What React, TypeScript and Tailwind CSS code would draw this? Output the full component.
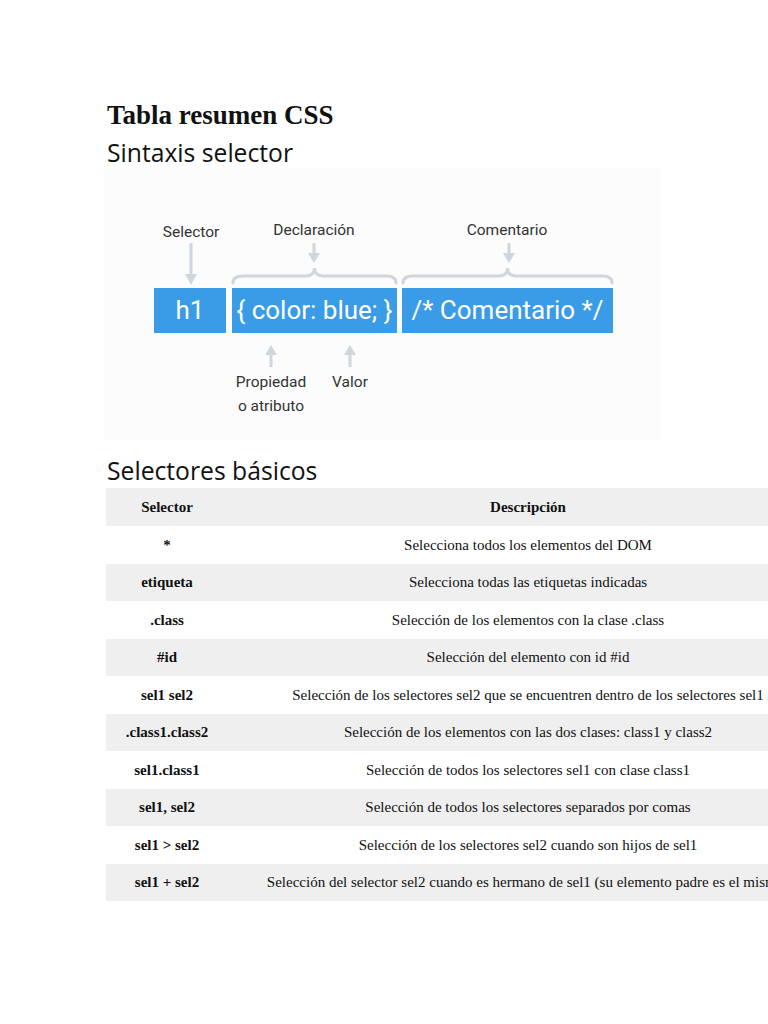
import React from 'react';

const rows: [string, string][] = [
  ['*', 'Selecciona todos los elementos del DOM'],
  ['etiqueta', 'Selecciona todas las etiquetas indicadas'],
  ['.class', 'Selección de los elementos con la clase .class'],
  ['#id', 'Selección del elemento con id #id'],
  ['sel1 sel2', 'Selección de los selectores sel2 que se encuentren dentro de los selectores sel1'],
  ['.class1.class2', 'Selección de los elementos con las dos clases: class1 y class2'],
  ['sel1.class1', 'Selección de todos los selectores sel1 con clase class1'],
  ['sel1, sel2', 'Selección de todos los selectores separados por comas'],
  ['sel1 > sel2', 'Selección de los selectores sel2 cuando son hijos de sel1'],
  ['sel1 + sel2', 'Selección del selector sel2 cuando es hermano de sel1 (su elemento padre es el mismo)'],
];

// llave horizontal entre x1 y x2 (coordenadas del diagrama)
function brace(x1: number, x2: number) {
  const mid = (x1 + x2) / 2;
  return `M ${x1} 115 Q ${x1} 108 ${x1 + 10} 108 L ${mid - 9} 108 Q ${mid} 108 ${mid} 100 Q ${mid} 108 ${mid + 9} 108 L ${x2 - 10} 108 Q ${x2} 108 ${x2} 115`;
}

function SyntaxDiagram() {
  const stroke = '#cfd6dd';
  return (
    <div className="relative w-[557px] h-[272px] bg-[#fcfcfc] ml-[-3px] font-['Roboto',sans-serif]">
      <svg className="absolute inset-0" width="557" height="272" viewBox="0 0 557 272" fill="none">
        {/* flecha selector */}
        <line x1="87" y1="75" x2="87" y2="108" stroke={stroke} strokeWidth="3" />
        <path d="M 81 106 L 93 106 L 87 117 Z" fill={stroke} />
        {/* flecha declaración */}
        <line x1="210" y1="75" x2="210" y2="86" stroke={stroke} strokeWidth="3" />
        <path d="M 204 85 L 216 85 L 210 95 Z" fill={stroke} />
        {/* flecha comentario */}
        <line x1="405" y1="75" x2="405" y2="86" stroke={stroke} strokeWidth="3" />
        <path d="M 399 85 L 411 85 L 405 95 Z" fill={stroke} />
        <path d={brace(129, 292)} stroke={stroke} strokeWidth="3" strokeLinecap="round" />
        <path d={brace(299, 508)} stroke={stroke} strokeWidth="3" strokeLinecap="round" />
        {/* flechas hacia arriba */}
        <path d="M 161 187 L 173 187 L 167 177 Z" fill={stroke} />
        <line x1="167" y1="186" x2="167" y2="199" stroke={stroke} strokeWidth="3" />
        <path d="M 240 187 L 252 187 L 246 177 Z" fill={stroke} />
        <line x1="246" y1="186" x2="246" y2="199" stroke={stroke} strokeWidth="3" />
      </svg>

      <div className="absolute left-[42px] top-[53px] w-[90px] text-center text-[15.5px] text-[#333]">Selector</div>
      <div className="absolute left-[145px] top-[51px] w-[130px] text-center text-[15.5px] text-[#333]">Declaración</div>
      <div className="absolute left-[338px] top-[51px] w-[130px] text-center text-[15.5px] text-[#333]">Comentario</div>

      <div className="absolute left-[50px] top-[120px] w-[72px] h-[45px] bg-[#3a9be6] text-white text-[26px] flex items-center justify-center">h1</div>
      <div className="absolute left-[128px] top-[120px] w-[165px] h-[45px] bg-[#3a9be6] text-white text-[26px] flex items-center justify-center whitespace-nowrap">{'{ color: blue; }'}</div>
      <div className="absolute left-[298px] top-[120px] w-[211px] h-[45px] bg-[#3a9be6] text-white text-[26px] flex items-center justify-center whitespace-nowrap">/* Comentario */</div>

      <div className="absolute left-[114px] top-[202px] w-[106px] text-center text-[15.5px] leading-[24px] text-[#333]">
        Propiedad
        <br />o atributo
      </div>
      <div className="absolute left-[216px] top-[202px] w-[60px] text-center text-[15.5px] leading-[24px] text-[#333]">Valor</div>
    </div>
  );
}

export default function App() {
  return (
    <div className="w-[768px] min-h-[1024px] bg-white overflow-hidden text-[#111]">
      <div className="pl-[107px] pt-[99px] pb-[120px]">
        <h1 className="font-['Liberation_Serif',serif] font-bold text-[27px] leading-[32px]">Tabla resumen CSS</h1>
        <h2 className="font-['Open_Sans',sans-serif] text-[24.7px] leading-[30px] mt-[7px]">Sintaxis selector</h2>
        <SyntaxDiagram />
        <h2 className="font-['Open_Sans',sans-serif] text-[24.7px] leading-[32px] mt-[15px]">Selectores básicos</h2>
        <div className="w-[722px] ml-[-1px] mt-[1px] font-['Liberation_Serif',serif] text-[15px]">
          <div className="flex h-[38px] items-center bg-[#efefef] font-bold">
            <div className="w-[122px] shrink-0 text-center">Selector</div>
            <div className="flex-1 text-center">Descripción</div>
          </div>
          {rows.map(([sel, desc], i) => (
            <div key={sel} className={`flex h-[37.5px] items-center ${i % 2 === 1 ? 'bg-[#efefef]' : 'bg-white'}`}>
              <div className="w-[122px] shrink-0 text-center font-bold">{sel}</div>
              <div className="flex-1 text-center whitespace-nowrap">{desc}</div>
            </div>
          ))}
        </div>
      </div>
    </div>
  );
}
